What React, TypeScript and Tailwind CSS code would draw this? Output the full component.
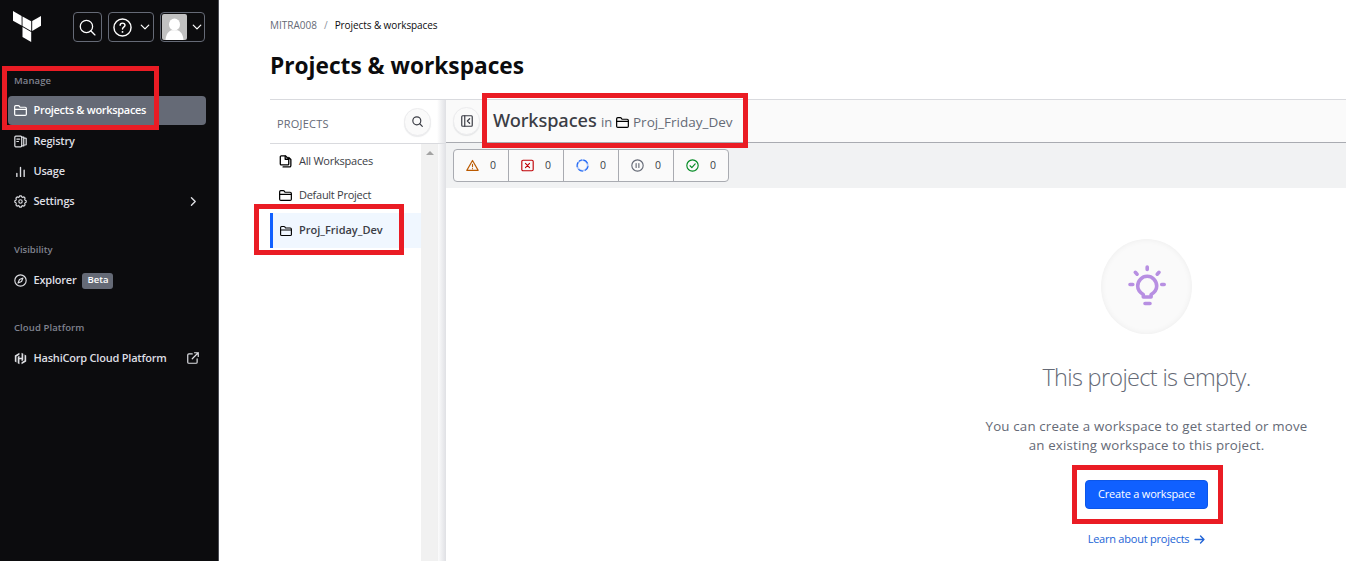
import React, { type ReactNode } from "react";

type IconProps = { className?: string; children?: ReactNode; sw?: number };

function Svg({ className = "", children, sw = 1.5 }: IconProps) {
  return (
    <svg
      viewBox="0 0 16 16"
      className={`shrink-0 ${className}`}
      fill="none"
      stroke="currentColor"
      strokeWidth={sw}
      strokeLinecap="round"
      strokeLinejoin="round"
    >
      {children}
    </svg>
  );
}

const Folder = ({ className = "" }: IconProps) => (
  <Svg className={className}>
    <path d="M.8 12.500V3.300c0-.8.5-1.300 1.300-1.300h3.200c.5 0 .9.2 1.200.6l.9 1.400h6.300c.9 0 1.500.6 1.500 1.500v7c0 .9-.6 1.500-1.500 1.500H2.300c-.9 0-1.500-.6-1.500-1.500z" />
    <path d="M1 6.700h14" />
  </Svg>
);
const Search = ({ className = "", sw = 1.5 }: IconProps) => (
  <Svg className={className} sw={sw}>
    <circle cx="7" cy="7" r="5.800" />
    <path d="M11.300 11.300L15 15" />
  </Svg>
);
const Chevron = ({ className = "" }: IconProps) => (
  <Svg className={className} sw={2}>
    <path d="M2 5l6 6 6-6" />
  </Svg>
);

function Terraform() {
  return (
    <svg viewBox="0 0 28 31" className="h-[31px] w-[28px]" fill="#fff">
      <path d="M0 0l8.600 4.900v9.700L0 9.700z" />
      <path d="M9.500 5.400l8.700 4.900v9.800l-8.700-5z" />
      <path d="M28 5v9.800l-8.800 5.100V10.100z" />
      <path d="M9.500 16.100l8.700 5V31l-8.700-5z" />
    </svg>
  );
}

function NavItem({
  icon,
  label,
  children,
  active = false,
}: {
  icon: ReactNode;
  label: ReactNode;
  children?: ReactNode;
  active?: boolean;
}) {
  return (
    <div
      className={`flex h-[29px] w-[198px] items-center rounded-[4px] pr-[7px] pl-[6px] text-[11px] font-semibold ${
        active ? "bg-[#656a76] tracking-[-0.31px] text-white" : "tracking-[-0.210px] text-[#dedfe3]"
      }`}
    >
      <span className="flex w-[19.5px] shrink-0">{icon}</span>
      <span className="whitespace-nowrap">{label}</span>
      {children}
    </div>
  );
}

function NavHeading({ className = "", children }: { className?: string; children: ReactNode }) {
  return (
    <h2 className={`pl-[6px] text-[9.500px] leading-[16px] font-semibold text-[#80838e] ${className}`}>{children}</h2>
  );
}

function Sidebar() {
  const box = "flex h-[30px] items-center rounded-[4px] border border-[#656a76]";
  return (
    <aside className="flex h-full w-[219px] shrink-0 flex-col border-r border-[#4b4d54] bg-[#0c0c0e] text-white">
      <div className="flex h-[54px] pt-[11px] pl-[13px]">
        <Terraform />
        <div className="mt-[1px] ml-[32px] flex gap-[6px]">
          <div className={`${box} w-[29px] justify-center`}>
            <Search className="h-[17px] w-[17px]" sw={1.2} />
          </div>
          <div className={`${box} w-[46px] justify-between pr-[3px] pl-[4px]`}>
            <Svg className="h-[19px] w-[19px]" sw={1.2}>
              <circle cx="8" cy="8" r="7.200" />
              <path d="M6 6.200c0-1.200.9-1.900 2-1.900s2.100.7 2.100 1.900c0 1.400-2.100 1.600-2.100 3" />
              <path d="M8 11.600v.1" strokeWidth="1.500" />
            </Svg>
            <Chevron className="h-[10px] w-[10px]" />
          </div>
          <div className={`${box} w-[45px] justify-between pr-[2px] pl-[1px]`}>
            <svg viewBox="0 0 25 26" className="h-[26px] w-[25px]">
              <rect width="25" height="26" rx="2" fill="#c1c1c1" />
              <ellipse cx="12.500" cy="10.500" rx="5.500" ry="6" fill="#fff" />
              <path d="M3.500 26c.3-5 2.700-8.700 6-9.700h6c3.300 1 5.700 4.700 6 9.700z" fill="#fff" />
            </svg>
            <Chevron className="h-[10px] w-[10px]" />
          </div>
        </div>
      </div>
      <div className="flex flex-col pl-[8px]">
        <NavHeading className="mt-[19px] mb-[7px] tracking-[0.100px]">Manage</NavHeading>
        <NavItem active icon={<Folder className="h-[13px] w-[13px]" />} label="Projects & workspaces" />
        <div className="h-[2px]" />
        <NavItem
          label="Registry"
          icon={
            <Svg className="h-[13px] w-[13px]">
              <rect x="1" y="1.500" width="8.500" height="13" rx="1.200" />
              <path d="M3.500 5h3.500M3.500 8h2" />
              <path d="M12 2.500v11M15 4v8M9.500 2.500H12M12 13.500H9.500M12 3.500l3 .5M12 12.500l3-.5" />
            </Svg>
          }
        />
        <div className="h-[1px]" />
        <NavItem
          label="Usage"
          icon={
            <Svg className="h-[13px] w-[13px]" sw={1.7}>
              <path d="M3.500 14v-3.500M8 14V3M12.500 14V6.500" />
            </Svg>
          }
        />
        <div className="h-[1px]" />
        <NavItem
          label="Settings"
          icon={
            <Svg className="h-[13px] w-[13px]" sw={1.4}>
              <circle cx="8" cy="8" r="2.100" />
              <path d="M6.500 2.300L7 1h2l.5 1.300 1.400.6 1.300-.6 1.500 1.500-.6 1.300.6 1.400L15 7v2l-1.300.5-.6 1.400.6 1.300-1.500 1.500-1.300-.6-1.400.6L9 15H7l-.5-1.300-1.400-.6-1.300.6-1.500-1.500.6-1.300-.6-1.400L1 9V7l1.300-.5.6-1.400-.6-1.300 1.500-1.500 1.300.6z" />
            </Svg>
          }
        >
          <Svg className="ml-auto h-[11px] w-[11px]" sw={2}>
            <path d="M5 2.500L10.500 8 5 13.500" />
          </Svg>
        </NavItem>
        <NavHeading className="mt-[26px] mb-[8px]">Visibility</NavHeading>
        <NavItem
          label="Explorer"
          icon={
            <Svg className="h-[13px] w-[13px]" sw={1.4}>
              <circle cx="8" cy="8" r="7" />
              <path d="M11 5L9.300 9.300 5 11l1.700-4.300z" />
            </Svg>
          }
        >
          <span className="ml-[6px] flex h-[16px] w-[31px] items-center justify-center rounded-[3px] bg-[#656a76] text-[9.500px] tracking-[0px] text-white">
            Beta
          </span>
        </NavItem>
        <NavHeading className="mt-[25px] mb-[8px] tracking-[0.100px]">Cloud Platform</NavHeading>
        <NavItem
          label="HashiCorp Cloud Platform"
          icon={
            <svg viewBox="0 0 16 16" className="h-[13px] w-[13px]" fill="currentColor">
              <path d="M6.700 1L1 4.200v7.500l2 1.100V5.400l3.700-2.100z" />
              <path d="M9.300 1v6H6.700V4.700l-2.100 1.200v8L6.700 15V9h2.600v2.300l2.100-1.200v-8z" />
              <path d="M9.300 15l5.700-3.200V4.300l-2-1.100v7.400l-3.700 2.100z" />
            </svg>
          }
        >
          <Svg className="mb-[2px] ml-auto h-[12px] w-[12px]" sw={1.6}>
            <path d="M10 1h5v5M15 1L7 9M7 2.500H2.500C1.700 2.500 1 3.200 1 4v9.500c0 .8.700 1.500 1.500 1.500H12c.8 0 1.500-.7 1.500-1.500V9" />
          </Svg>
        </NavItem>
      </div>
    </aside>
  );
}

function RoundButton({ children }: { children: ReactNode }) {
  return (
    <span className="flex h-[28px] w-[27px] shrink-0 items-center justify-center rounded-full border border-[#ececee] bg-[#fafafa] text-[#3b3d45] shadow-[0_1px_1px_#65676d22]">
      {children}
    </span>
  );
}

function ProjectsPanel() {
  return (
    <section className="relative flex w-[176px] shrink-0 flex-col">
      <div className="flex h-[44px] items-center justify-between border-b border-[#d9dade] pr-[15px] pl-[7px]">
        <span className="mt-[5px] text-[11px] tracking-[0.200px] text-[#656a76]">PROJECTS</span>
        <RoundButton>
          <Search className="h-[11px] w-[11px]" sw={1.7} />
        </RoundButton>
      </div>
      <div className="flex flex-1 text-[11px] text-[#3b3d45]">
        <ul className="w-[151px]">
          <li className="flex h-[34px] items-center pl-[9px]">
            <Svg className="h-[13px] w-[13px] text-black" sw={1.6}>
              <path d="M2.800 1h5L12 5v6c0 .7-.5 1.200-1.200 1.200h-8c-.7 0-1.200-.5-1.200-1.200V2.200C1.600 1.500 2.100 1 2.800 1z" />
              <path d="M7.600 1.300v3.900H12M12 3l2.600 2.500v7.300c0 1.100-.7 1.900-1.800 1.900H5" />
            </Svg>
            <span className="ml-[7px] tracking-[-0.230px]">All Workspaces</span>
          </li>
          <li className="flex h-[35px] items-center pl-[9px]">
            <Folder className="h-[13px] w-[13px] text-black" />
            <span className="ml-[7px] tracking-[-0.270px]">Default Project</span>
          </li>
          <li className="flex h-[35px] items-center border-l-[3px] border-[#1060ff] bg-[#f0f7ff] pl-[7px] font-semibold">
            <Folder className="h-[12px] w-[12px] text-black" />
            <span className="ml-[7px]">Proj_Friday_Dev</span>
          </li>
        </ul>
        <div className="flex w-[17px] justify-center bg-[#f1f1f1] pt-[7px]">
          <svg viewBox="0 0 8 4" className="h-[4px] w-[8px]" fill="#a3a3a3">
            <path d="M4 0l4 4H0z" />
          </svg>
        </div>
      </div>
      <div className="absolute top-0 right-0 h-full w-[9px] bg-linear-to-r from-transparent to-[#dfe0e4]" />
    </section>
  );
}

const statuses = [
  {
    key: "attention",
    color: "text-[#bb5a00]",
    icon: <path d="M8 1.800L15 14H1zM8 6.500v3M8 11.800v.1" />,
  },
  {
    key: "errored",
    color: "text-[#c00005]",
    icon: (
      <>
        <rect x="1" y="1.500" width="14" height="13" rx="1.500" />
        <path d="M5.500 5.500l5 5M10.500 5.500l-5 5" />
      </>
    ),
  },
  {
    key: "running",
    color: "text-[#1c65f5]",
    icon: (
      <>
        <circle cx="8" cy="8" r="6.500" strokeOpacity=".35" strokeWidth="2.200" />
        <path d="M9.500 1.400a6.800 6.800 0 014.500 3.400M14.700 9.300a6.800 6.800 0 01-3 4.400M8 14.800a6.800 6.800 0 01-4.500-1.700M1.400 9.500a6.800 6.800 0 011-5M4.200 2.500A6.800 6.800 0 017 1.300" />
      </>
    ),
  },
  {
    key: "on-hold",
    color: "text-[#656a76]",
    icon: (
      <>
        <circle cx="8" cy="8" r="7" />
        <path d="M6.300 5.500v5M9.700 5.500v5" />
      </>
    ),
  },
  {
    key: "applied",
    color: "text-[#008a22]",
    icon: (
      <>
        <circle cx="8" cy="8" r="7" />
        <path d="M5 8.300l2.200 2.200L11.300 6" />
      </>
    ),
  },
];

function WorkspacesPanel() {
  return (
    <section className="flex min-w-0 flex-1 flex-col">
      <header className="flex h-[43px] items-center border-b border-[#a9abb1] bg-[#fafafa] pl-[7px]">
        <RoundButton>
          <Svg className="h-[12px] w-[12px]" sw={1.6}>
            <rect x="1" y="1" width="14" height="14" rx="1.200" />
            <path d="M5 1v14M11.500 5L8.500 8l3 3" />
          </Svg>
        </RoundButton>
        <h2 className="mb-[2px] ml-[13px] w-[104px] font-['Noto_Sans'] text-[18.200px] leading-[24px] font-medium tracking-[-0.080px] whitespace-nowrap text-[#3b3d45]">
          Workspaces
        </h2>
        <span className="mt-[4px] ml-[4px] w-[11px] text-[13px] text-[#656a76]">in</span>
        <Folder className="mt-[3px] ml-[4px] h-[13px] w-[13px] text-black" />
        <span className="mt-[3px] ml-[4px] text-[13.500px] text-[#656a76]">Proj_Friday_Dev</span>
      </header>
      <div className="flex h-[45px] bg-[#f1f2f3] pt-[6px] pl-[7px]">
        <ul className="flex h-[33px] divide-x divide-[#a9abb1] rounded-[4px] border border-[#a9abb1] bg-[#fafafa]">
          {statuses.map((s) => (
            <li key={s.key} className="flex w-[55px] items-center pl-[12px] last:w-[54px]">
              <Svg className={`h-[13px] w-[13px] ${s.color}`} sw={1.4}>
                {s.icon}
              </Svg>
              <span className="ml-[11px] text-[10.500px] text-[#3b3d45]">0</span>
            </li>
          ))}
        </ul>
      </div>
      <div className="flex flex-1 flex-col items-center pt-[51px] pl-[501px]">
        <div className="flex h-[95px] w-[91px] shrink-0 items-center justify-center rounded-[50%] bg-[#fafafa] pb-[3px] shadow-[inset_0_0_6px_#0000000f]">
          <svg
            viewBox="0 0 38 42"
            className="h-[42px] w-[38px] text-[#b78fe2]"
            fill="none"
            stroke="currentColor"
            strokeWidth="3.600"
            strokeLinecap="round"
            strokeLinejoin="round"
          >
            <path d="M15.300 33v-2.500c-3.400-2-5.600-5-5.600-8.400a9.500 9.800 0 0119 0c0 3.400-2.200 6.400-5.600 8.400V33z" />
            <path d="M17 39.500h5M19.200 3v2.500M2 20.500h2.800M33.700 20.500h2.500M7.300 8.300l1.800 1.900M31 8.300l-1.800 1.900" />
          </svg>
        </div>
        <h3 className="mt-[26px] text-[23.500px] leading-[34px] font-light tracking-[-0.680px] whitespace-nowrap text-[#656a76]">
          This project is empty.
        </h3>
        <p className="mt-[23px] text-center text-[13.300px] leading-[19px] tracking-[0.170px] whitespace-nowrap text-[#656a76]">
          You can create a workspace to get started or move
          <br />
          an existing workspace to this project.
        </p>
        <button className="mt-[25px] h-[29px] w-[123px] shrink-0 rounded-[4px] border border-[#0c56e9] bg-[#1060ff] text-[11px] tracking-[-0.200px] whitespace-nowrap text-white">
          Create a workspace
        </button>
        <a className="mt-[22px] flex items-center gap-[5px] text-[11px] leading-[16px] tracking-[-0.230px] whitespace-nowrap text-[#2264d6]">
          Learn about projects
          <Svg className="h-[11px] w-[11px]" sw={2}>
            <path d="M1.500 8h13M9.500 3l5 5-5 5" />
          </Svg>
        </a>
      </div>
    </section>
  );
}

export default function App() {
  return (
    <div className="relative flex h-[561px] w-[1346px] overflow-hidden bg-white font-['Open_Sans','Noto_Sans',sans-serif]">
      <Sidebar />
      <main className="flex min-w-0 flex-1 flex-col pl-[51px]">
        <nav className="mt-[17px] flex h-[16px] items-center text-[10px]">
          <span className="text-[#656a76]">MITRA008</span>
          <span className="mx-[7px] text-[#8c909c]">/</span>
          <span className="tracking-[-0.080px] text-[#0c0c0e]">Projects & workspaces</span>
        </nav>
        <h1 className="mt-[15px] text-[22.700px] leading-[36px] font-bold text-[#0c0c0e]">Projects & workspaces</h1>
        <div className="mt-[15px] flex flex-1 border-t border-[#d9dade]">
          <ProjectsPanel />
          <WorkspacesPanel />
        </div>
      </main>
      <div className="absolute top-[66px] left-[2px] h-[64px] w-[157px] border-[5px] border-[#ea1c24]" />
      <div className="absolute top-[204px] left-[254px] h-[51px] w-[150px] border-[5px] border-[#ea1c24]" />
      <div className="absolute top-[93px] left-[482px] h-[55px] w-[266px] border-[5px] border-[#ea1c24]" />
      <div className="absolute top-[465px] left-[1072px] h-[59px] w-[151px] border-[5px] border-[#ea1c24]" />
    </div>
  );
}
